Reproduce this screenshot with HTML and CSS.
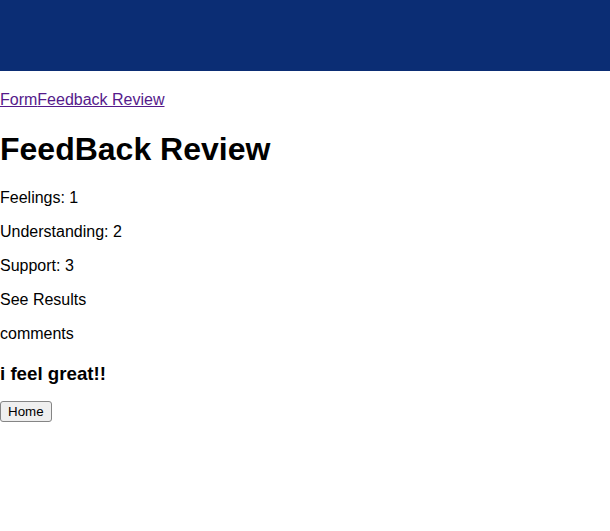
FILE: index.html
```html
<!DOCTYPE html>
<html>
<head>
<meta charset="utf-8">
<link rel="stylesheet" href="styles.css">
</head>
<body>
<header class="topbar"></header>
<nav class="nav"><a class="link" href="#form">Form</a><a class="link" href="#review">Feedback Review</a></nav>
<h1 class="title">FeedBack Review</h1>
<p class="line">Feelings: 1</p>
<p class="line">Understanding: 2</p>
<p class="line">Support: 3</p>
<p class="line">See Results</p>
<p class="line">comments</p>
<h3 class="comment">i feel great!!</h3>
<p class="line"><button class="btn">Home</button></p>
</body>
</html>
```
FILE: styles.css
```css
html, body {
  margin: 0;
  padding: 0;
  background: #fff;
}
body {
  font-family: "Liberation Sans", Arial, sans-serif;
  font-size: 16px;
  color: #000;
}
.topbar {
  display: block;
  height: 71px;
  background: #0b2d74;
}
.nav {
  margin: 20px 0 0;
  line-height: 18px;
}
.link {
  color: #551a8b;
  text-decoration: underline;
}
.title {
  font-size: 32px;
  font-weight: bold;
  margin: 22px 0 21px;
}
.line {
  margin: 16px 0;
}
.comment {
  font-size: 18.72px;
  font-weight: bold;
  margin: 20px 0 16px;
}
.btn {
  font-family: "Liberation Sans", Arial, sans-serif;
  font-size: 13.33px;
  line-height: 15px;
  padding: 2px 7px;
  border: 1px solid #858585;
  border-radius: 3px;
  background: #efefef;
  color: #000;
}
```
